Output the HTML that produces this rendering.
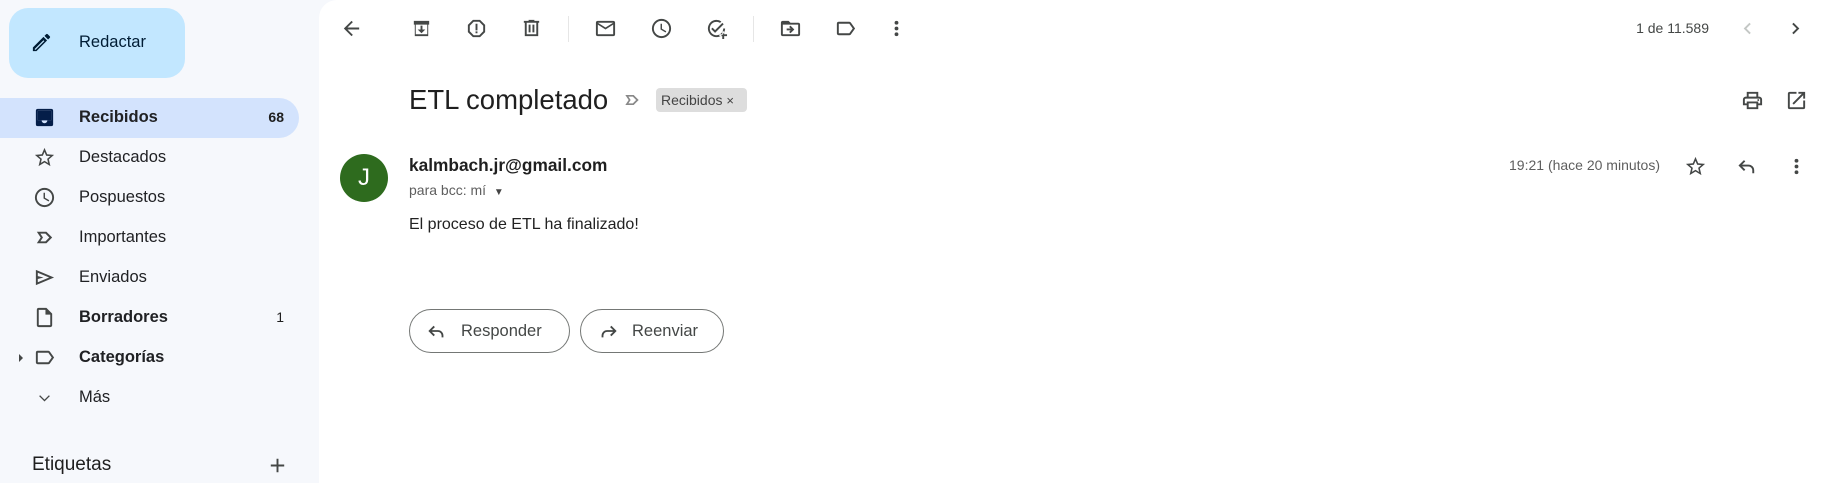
<!DOCTYPE html>
<html><head><meta charset="utf-8"><style>
*{margin:0;padding:0;box-sizing:border-box}
body{width:1847px;height:483px;overflow:hidden;background:#f6f8fc;font-family:"Liberation Sans",Arial,sans-serif;color:#1f1f1f;position:relative}
.abs{position:absolute}
.main{position:absolute;left:319px;top:0;width:1528px;height:483px;background:#fff;border-radius:18px 0 0 0}
.compose{left:9px;top:8px;width:176px;height:70px;background:#c2e7ff;border-radius:19px}
.compose span{position:absolute;left:70px;top:25px;font-size:16.5px;color:#001d35}
.nav{position:absolute;left:0;width:299px;height:40px}
.nav .t{position:absolute;left:79px;top:10px;font-size:16.5px;color:#202124}
.nav .c{position:absolute;right:15px;top:11px;font-size:14px}
.nav svg{position:absolute;left:33px;top:8px}
.sel{background:#d3e3fd;border-radius:0 20px 20px 0}
.b{font-weight:bold}
svg{fill:#444746}
.ic{position:absolute;width:23px;height:23px}
.sep{position:absolute;top:16px;width:1px;height:26px;background:#e6e6e6}
.btn{position:absolute;top:309px;height:44px;border:1px solid #747775;border-radius:22px;font-size:16.5px;color:#444746}
.btn span{position:absolute;top:12px}
</style></head><body>
<div class="abs compose"><svg class="ic" style="left:21px;top:23px" viewBox="0 0 24 24"><path d="M3 17.25V21h3.75L17.81 9.94l-3.75-3.75L3 17.25zm2.92 2.33H5v-.92l9.06-9.06.92.92L5.92 19.58zM20.71 7.04a1 1 0 000-1.41l-2.34-2.34a1 1 0 00-1.41 0l-1.830 1.83 3.75 3.75 1.83-1.83z" fill="#001d35"/></svg><span>Redactar</span></div>

<div class="nav sel" style="top:98px"><svg class="ic" viewBox="0 0 24 24"><path d="M19 3H5a2 2 0 00-2 2v14a2 2 0 002 2h14a2 2 0 002-2V5a2 2 0 00-2-2zm0 12h-4a3 3 0 01-6 0H5V5h14v10z" fill="#041e49"/><rect x="5" y="5" width="14" height="10" fill="#041e49"/></svg><span class="t b">Recibidos</span><span class="c b">68</span></div>
<div class="nav" style="top:138px"><svg class="ic" viewBox="0 0 24 24"><path d="M22 9.24l-7.19-.62L12 2 9.19 8.63 2 9.24l5.46 4.73L5.82 21 12 17.27 18.18 21l-1.63-7.03L22 9.24zM12 15.4l-3.76 2.27 1-4.28-3.32-2.88 4.38-.38L12 6.1l1.71 4.04 4.38.38-3.32 2.88 1 4.28L12 15.4z"/></svg><span class="t">Destacados</span></div>
<div class="nav" style="top:178px"><svg class="ic" viewBox="0 0 24 24"><path d="M12 2a10 10 0 100 20 10 10 0 000-20zm0 18a8 8 0 110-16 8 8 0 010 16zm.5-13H11v6l5.25 3.15.75-1.23-4.5-2.67z"/></svg><span class="t">Pospuestos</span></div>
<div class="nav" style="top:218px"><svg class="ic" viewBox="0 0 24 24"><path d="M4 18l4-6-4-6h10l6 6-6 6H4zm3.7-2H13l4-4-4-4H7.7l2.7 4z"/></svg><span class="t">Importantes</span></div>
<div class="nav" style="top:258px"><svg class="ic" viewBox="0 0 24 24"><path d="M3 20V4l19 8-19 8zm2-3l11.850-5L5 7v3.5l6 1.5-6 1.5V17z"/></svg><span class="t">Enviados</span></div>
<div class="nav" style="top:298px"><svg class="ic" viewBox="0 0 24 24"><path d="M14 2H6a2 2 0 00-2 2v16a2 2 0 002 2h12a2 2 0 002-2V8l-6-6zm4 18H6V4h7v5h5v11z"/></svg><span class="t b">Borradores</span><span class="c">1</span></div>
<div class="nav" style="top:338px"><svg style="position:absolute;left:17px;top:14px" width="8" height="12" viewBox="0 0 8 12"><path d="M2 2l4 4-4 4z" fill="#444746"/></svg><svg class="ic" viewBox="0 0 24 24"><path d="M17.63 5.84A2 2 0 0016 5H5a2 2 0 00-2 2v10a2 2 0 002 2h11c.67 0 1.27-.33 1.63-.84L22 12l-4.37-6.16zM16 17H5V7h11l3.55 5L16 17z"/></svg><span class="t b">Categorías</span></div>
<div class="nav" style="top:378px"><svg class="ic" viewBox="0 0 24 24"><path d="M7.4 9.6L12 14.2l4.6-4.6 1 1L12 16.2l-5.6-5.6z"/></svg><span class="t">Más</span></div>
<div class="abs" style="left:32px;top:454px;font-size:19px;color:#1f1f1f">Etiquetas</div>
<svg class="ic" style="left:266px;top:454px" viewBox="0 0 24 24"><path d="M19 13h-6v6h-2v-6H5v-2h6V5h2v6h6v2z"/></svg>

<div class="main">
<svg class="ic" style="left:21px;top:17px" viewBox="0 0 24 24"><path d="M20 11H7.83l5.59-5.59L12 4l-8 8 8 8 1.41-1.41L7.83 13H20v-2z"/></svg>
<svg class="ic" style="left:91px;top:17px" viewBox="0 0 24 24"><path d="M20 4H4v4h1v12h14V8h1V4zm-2 14H6V8h12v10zm-6-1l4-4h-3V9h-2v4H8l4 4z"/></svg>
<svg class="ic" style="left:146px;top:17px" viewBox="0 0 24 24"><path d="M15.73 3H8.27L3 8.27v7.46L8.27 21h7.46L21 15.73V8.27L15.73 3zM19 14.9L14.9 19H9.1L5 14.9V9.1L9.1 5h5.8L19 9.1v5.8zM11 7h2v7h-2zm0 8h2v2h-2z"/></svg>
<svg class="ic" style="left:201px;top:17px" viewBox="0 0 24 24"><path d="M15 4V3H9v1H4v2h1v14h14V6h1V4h-5zm2 14H7V6h10v12zM9 8h2v8H9zm4 0h2v8h-2z"/></svg>
<div class="sep" style="left:249px"></div>
<svg class="ic" style="left:275px;top:17px" viewBox="0 0 24 24"><path d="M20 4H4a2 2 0 00-2 2v12a2 2 0 002 2h16a2 2 0 002-2V6a2 2 0 00-2-2zm0 14H4V8l8 5 8-5v10zm-8-7L4 6h16l-8 5z"/></svg>
<svg class="ic" style="left:331px;top:17px" viewBox="0 0 24 24"><path d="M12 2a10 10 0 100 20 10 10 0 000-20zm0 18a8 8 0 110-16 8 8 0 010 16zm.5-13H11v6l5.25 3.15.75-1.23-4.5-2.67z"/></svg>
<svg class="ic" style="left:386px;top:17px" viewBox="0 0 24 24"><path d="M12 3a9 9 0 109 9h-2a7 7 0 11-3.3-5.9l1.4-1.4A9 9 0 0012 3zm-1.5 13.5L6.5 12.5l1.4-1.4 2.6 2.6 7.6-7.6 1.4 1.4zM18 15h2v3h3v2h-3v3h-2v-3h-3v-2h3z"/></svg>
<div class="sep" style="left:434px"></div>
<svg class="ic" style="left:460px;top:17px" viewBox="0 0 24 24"><path d="M20 6h-8l-2-2H4a2 2 0 00-2 2v12a2 2 0 002 2h16a2 2 0 002-2V8a2 2 0 00-2-2zm0 12H4V8h16v10zm-7.84-6H8v2h4.16l-1.59 1.59L11.99 17 16 13l-4.01-4-1.42 1.41L12.16 12z"/></svg>
<svg class="ic" style="left:515px;top:17px" viewBox="0 0 24 24"><path d="M17.63 5.84A2 2 0 0016 5H5a2 2 0 00-2 2v10a2 2 0 002 2h11c.67 0 1.27-.33 1.63-.84L22 12l-4.37-6.16zM16 17H5V7h11l3.55 5L16 17z"/></svg>
<svg class="ic" style="left:566px;top:17px" viewBox="0 0 24 24"><path d="M12 8a2 2 0 100-4 2 2 0 000 4zm0 2a2 2 0 100 4 2 2 0 000-4zm0 6a2 2 0 100 4 2 2 0 000-4z"/></svg>
<div class="abs" style="right:138px;top:20px;font-size:14px;color:#444746">1 de 11.589</div>
<svg class="ic" style="left:1417px;top:17px" viewBox="0 0 24 24"><path d="M15.41 7.41L14 6l-6 6 6 6 1.41-1.41L10.83 12z" fill="#c4c7c5"/></svg>
<svg class="ic" style="left:1465px;top:17px" viewBox="0 0 24 24"><path d="M10 6L8.59 7.41 13.17 12l-4.58 4.59L10 18l6-6z"/></svg>

<div class="abs" style="left:90px;top:84px;font-size:27.5px;color:#1f1f1f">ETL completado</div>
<svg class="ic" style="left:303px;top:90px;width:20px;height:20px" viewBox="0 0 24 24"><path d="M4 18l4-6-4-6h10l6 6-6 6H4zm3.7-2H13l4-4-4-4H7.7l2.7 4z" fill="#888"/></svg>
<div class="abs" style="left:337px;top:88px;width:91px;height:24px;background:#ddd;border-radius:4px;font-size:14px;color:#444;padding:4px 0 0 5px">Recibidos <span style="font-size:13px">×</span></div>
<svg class="ic" style="left:1422px;top:89px" viewBox="0 0 24 24"><path d="M19 8h-1V3H6v5H5a3 3 0 00-3 3v6h4v4h12v-4h4v-6a3 3 0 00-3-3zM8 5h8v3H8V5zm8 14H8v-4h8v4zm4-4h-2v-2H6v2H4v-4a1 1 0 011-1h14a1 1 0 011 1v4z"/><circle cx="18" cy="11.5" r="1"/></svg>
<svg class="ic" style="left:1466px;top:89px" viewBox="0 0 24 24"><path d="M19 19H5V5h7V3H5a2 2 0 00-2 2v14a2 2 0 002 2h14a2 2 0 002-2v-7h-2v7zM14 3v2h3.590l-9.83 9.83 1.41 1.41L19 6.41V10h2V3h-7z"/></svg>

<div class="abs" style="left:21px;top:154px;width:48px;height:48px;border-radius:50%;background:#2e6b1e;color:#fff;font-size:24px;text-align:center;line-height:48px">J</div>
<div class="abs b" style="left:90px;top:155px;font-size:17.3px;color:#1f1f1f">kalmbach.jr@gmail.com</div>
<div class="abs" style="left:90px;top:182px;font-size:14px;color:#5e5e5e">para bcc: mí <span style="font-size:10px;margin-left:4px;color:#444">▼</span></div>
<div class="abs" style="right:187px;top:157px;font-size:14px;color:#5e5e5e">19:21 (hace 20 minutos)</div>
<svg class="ic" style="left:1365px;top:155px" viewBox="0 0 24 24"><path d="M22 9.24l-7.19-.62L12 2 9.19 8.63 2 9.24l5.46 4.73L5.82 21 12 17.27 18.18 21l-1.63-7.03L22 9.24zM12 15.4l-3.76 2.27 1-4.28-3.32-2.88 4.38-.38L12 6.1l1.71 4.04 4.38.38-3.32 2.88 1 4.28L12 15.4z"/></svg>
<svg class="ic" style="left:1417px;top:155px" viewBox="0 0 24 24"><path d="M9 6L4 11l5 5M4 11h9a5 5 0 015 5v3" fill="none" stroke="#444746" stroke-width="2"/></svg>
<svg class="ic" style="left:1466px;top:155px" viewBox="0 0 24 24"><path d="M12 8a2 2 0 100-4 2 2 0 000 4zm0 2a2 2 0 100 4 2 2 0 000-4zm0 6a2 2 0 100 4 2 2 0 000-4z"/></svg>

<div class="abs" style="left:90px;top:216px;font-size:16px;color:#222">El proceso de ETL ha finalizado!</div>

<div class="btn" style="left:90px;width:161px"><svg class="ic" style="left:16px;top:10px;width:22px;height:22px" viewBox="0 0 24 24"><path d="M9 7L4 12l5 5M4 12h9a5 5 0 015 5v2" fill="none" stroke="#444746" stroke-width="2"/></svg><span style="left:51px">Responder</span></div>
<div class="btn" style="left:261px;width:144px"><svg class="ic" style="left:16px;top:10px;width:22px;height:22px" viewBox="0 0 24 24"><path d="M15 7l5 5-5 5M20 12h-9a5 5 0 00-5 5v2" fill="none" stroke="#444746" stroke-width="2"/></svg><span style="left:51px">Reenviar</span></div>
</div>
</body></html>
